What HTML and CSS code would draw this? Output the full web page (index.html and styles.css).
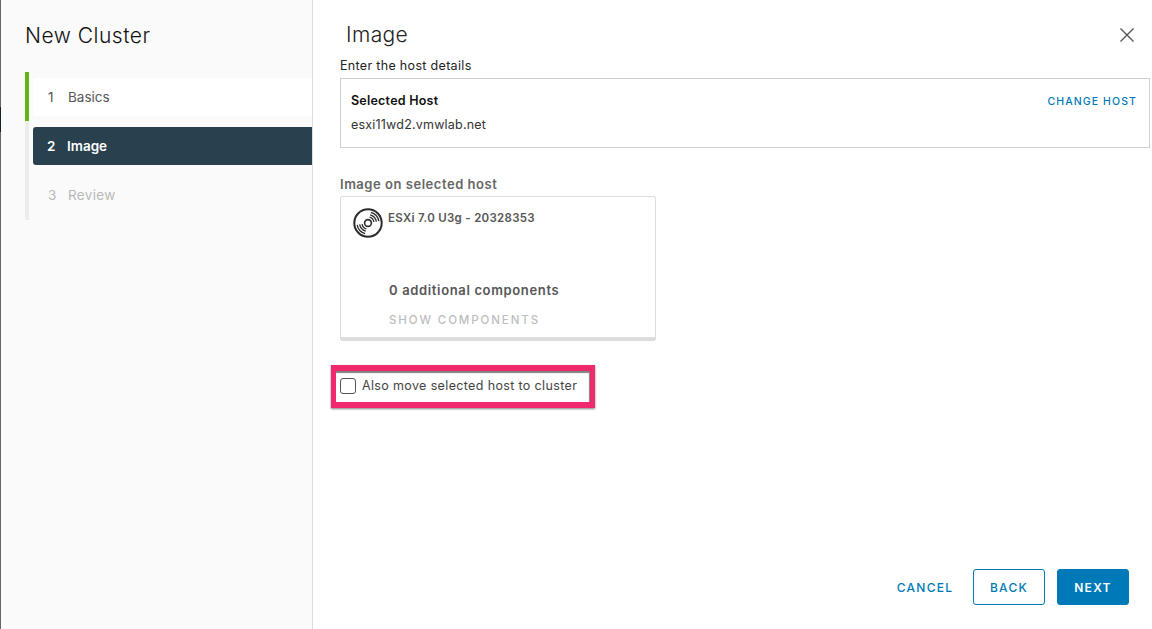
FILE: index.html
```html
<!DOCTYPE html>
<html lang="en">
<head>
<meta charset="utf-8">
<title>New Cluster</title>
<link rel="stylesheet" href="styles.css">
</head>
<body>
<div class="modal">
  <div class="backdrop-sliver"></div>
  <aside class="side">
    <h1 class="side-title">New Cluster</h1>
    <ol class="steps">
      <li class="step done"><span class="num">1</span><span>Basics</span></li>
      <li class="step active"><span class="num">2</span><span>Image</span></li>
      <li class="step todo"><span class="num">3</span><span>Review</span></li>
    </ol>
  </aside>
  <main class="main">
    <header class="head">
      <h2 class="title">Image</h2>
      <svg class="close" width="16" height="16" viewBox="0 0 16 16" aria-label="Close"><path d="M1.500 1.500 14.500 14.500M14.500 1.500 1.500 14.500" stroke="#565656" stroke-width="1.400" fill="none"/></svg>
    </header>
    <p class="lead">Enter the host details</p>
    <section class="host">
      <div>
        <div class="host-label">Selected Host</div>
        <div class="host-name">esxi11wd2.vmwlab.net</div>
      </div>
      <a class="change">CHANGE HOST</a>
    </section>
    <h3 class="img-label">Image on selected host</h3>
    <section class="card">
      <div class="card-top">
        <svg class="disc" width="30" height="30" viewBox="0 0 30 30" fill="none" stroke="#2b2b2b">
          <circle cx="15" cy="15" r="13.700" stroke-width="2"/>
          <circle cx="15" cy="15" r="3.400" stroke-width="1.600"/>
          <path d="M16.550 9.200A6 6 0 0 1 20.900 13.960M17.200 6.790A8.500 8.500 0 0 1 23.370 13.520M17.850 4.370A11 11 0 0 1 25.830 13.090M13.450 20.800A6 6 0 0 1 9.100 16.040M12.800 23.210A8.500 8.500 0 0 1 6.630 16.480M12.150 25.630A11 11 0 0 1 4.170 16.910" stroke-width="1.300"/>
        </svg>
        <span class="version">ESXi 7.0 U3g - 20328353</span>
      </div>
      <div class="components">0 additional components</div>
      <div class="show">SHOW COMPONENTS</div>
    </section>
    <div class="highlight">
      <label class="check"><span class="box"></span><span>Also move selected host to cluster</span></label>
    </div>
    <footer class="foot">
      <button class="btn link">CANCEL</button>
      <button class="btn outline">BACK</button>
      <button class="btn solid">NEXT</button>
    </footer>
  </main>
</div>
</body>
</html>
```
FILE: styles.css
```css
* { box-sizing: border-box; }
html, body { margin: 0; height: 100%; }
body {
  background: #fff;
  font-family: "Inter", "Liberation Sans", sans-serif;
  overflow: hidden;
}
.modal { display: flex; height: 629px; border-left: 1px solid #666; position: relative; }
.backdrop-sliver {
  position: absolute;
  left: -1px;
  top: 107px;
  width: 1px;
  height: 25px;
  background: #14202c;
}
.side {
  width: 312px;
  flex: none;
  background: #fafafa;
  border-right: 1px solid #dcdcdc;
  padding: 22px 0 0 24px;
}
.side-title {
  margin: 0;
  font-size: 21px;
  line-height: 28px;
  font-weight: 300;
  letter-spacing: 0.500px;
  color: #111;
}
.steps {
  list-style: none;
  margin: 22px 0 0;
  padding: 6px 0 0;
  width: 287px;
  border-left: 4px solid #ececec;
  position: relative;
  height: 148px;
}
.steps::before {
  content: "";
  position: absolute;
  left: -4px;
  top: 0;
  width: 4px;
  height: 49px;
  background: #60b515;
}
.step {
  display: flex;
  align-items: center;
  height: 38px;
  margin: 0 0 11px 4px;
  padding-left: 15px;
  font-size: 13.500px;
  border-radius: 3px 0 0 3px;
}
.num { width: 20px; }
.done { background: #fff; color: #565656; }
.active { background: #29414e; color: #fff; font-weight: 600; padding-left: 14px; }
.todo { color: #b9b9b9; letter-spacing: 0.350px; }
.main { flex: 1; padding: 0 2px 0 27px; display: flex; flex-direction: column; }
.head { display: flex; justify-content: space-between; align-items: center; padding: 20px 15px 0 6px; height: 50px; }
.title { margin: 0; font-size: 21px; line-height: 28px; font-weight: 300; letter-spacing: 0.400px; color: #222; }
.lead { margin: 3px 0 -1px; font-size: 12.500px; line-height: 26px; height: 26px; letter-spacing: 0.320px; color: #222; }
.host {
  display: flex;
  justify-content: space-between;
  height: 70px;
  border: 1px solid #cfcfcf;
  padding: 14px 12px 0 10px;
}
.host-label { font-size: 12.500px; font-weight: 600; line-height: 16px; letter-spacing: 0.230px; color: #111; }
.host-name { font-size: 12.500px; line-height: 16px; margin-top: 8px; letter-spacing: 0.200px; color: #333; }
.change { font-size: 10.500px; line-height: 16px; margin-top: 1px; letter-spacing: 1.100px; font-weight: 500; color: #0079b8; }
.img-label { margin: 27px 0 0; font-size: 13px; line-height: 18px; font-weight: 600; letter-spacing: 0.530px; color: #666; }
.card {
  margin-top: 3px;
  width: 316px;
  height: 145px;
  background: #fff;
  border: 1px solid #ddd;
  border-bottom-width: 4px;
  border-radius: 3px;
  padding: 11px 0 0 12px;
}
.card-top { display: flex; align-items: flex-start; height: 72px; }
.version { margin: 2px 0 0 5px; font-size: 11.500px; line-height: 16px; font-weight: 600; letter-spacing: 0.300px; color: #565656; }
.disc { flex: none; }
.components { margin: 1px 0 0 36px; font-size: 13px; line-height: 18px; font-weight: 600; letter-spacing: 0.650px; color: #565656; }
.show { margin: 13px 0 0 36px; font-size: 11.500px; line-height: 16px; letter-spacing: 1.900px; font-weight: 500; color: #bdbdbd; }
.highlight {
  margin: 24px 0 0 -9px;
  width: 264px;
  height: 43px;
  border: solid #f0296e;
  border-width: 6px 5px;
  box-shadow: inset -1px 2px 1px #808080, 0 1px 2px rgba(0,0,0,.5);
  display: flex;
  align-items: center;
  padding: 0 0 2px 4px;
}
.check { display: flex; align-items: center; gap: 6px; font-size: 12.500px; letter-spacing: 0.360px; color: #444; }
.box { width: 16px; height: 16px; border: 1px solid #555; border-radius: 3px; background: #fff; }
.foot { margin-top: auto; display: flex; justify-content: flex-end; align-items: center; gap: 12px; padding: 0 21px 24px 0; }
.btn {
  height: 36px;
  border-radius: 3px;
  font-family: inherit;
  font-size: 12px;
  font-weight: 500;
  letter-spacing: 1.300px;
  padding: 0;
  border: 1px solid #0079b8;
  background: #fff;
  color: #0079b8;
}
.link { border-color: transparent; width: 72px; }
.outline { width: 72px; }
.solid { width: 72px; background: #0079b8; color: #fff; font-weight: 600; }
```
